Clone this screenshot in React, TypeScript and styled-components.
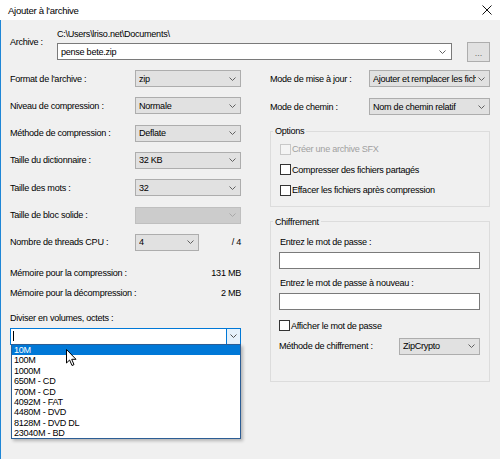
import React from 'react'
import styled, { createGlobalStyle } from 'styled-components'

const GlobalStyle = createGlobalStyle`
  * { box-sizing: border-box; }
  html, body { margin: 0; padding: 0; background: #f0f0f0; }
  body {
    font-family: 'Liberation Sans', Arial, sans-serif;
    font-size: 9.1px;
    letter-spacing: -0.28px;
    color: #000;
  }
`

const Window = styled.div`
  width: 500px;
  height: 459px;
  overflow: hidden;
  background: #f0f0f0;
`

const TitleBar = styled.div`
  height: 20px;
  background: #fff;
  display: flex;
  align-items: center;
  justify-content: space-between;
  padding: 0 8px;
  font-size: 9.6px;
`

const Content = styled.div`
  height: 439px;
  border-left: 1px solid #1e86d6;
  padding: 8px 10px 0 9px;
`

const ArchiveRow = styled.div`
  display: flex;
`

const ArchiveLabel = styled.div`
  width: 47px;
  margin-top: 8px;
  line-height: 12px;
`

const ArchiveMain = styled.div`
  flex: 1;
  display: flex;
  flex-direction: column;
`

const PathText = styled.div`
  line-height: 12px;
  margin-bottom: 3px;
`

const ComboRow = styled.div`
  height: 17px;
  display: flex;
  align-items: center;
`

const TextBox = styled.div<{ $grow?: boolean }>`
  ${(p) => (p.$grow ? 'flex: 1;' : 'width: 100%;')}
  height: 17px;
  background: #fff;
  border: 1px solid #7a7a7a;
  display: flex;
  align-items: center;
  justify-content: space-between;
  padding: 0 5px 0 3px;
`

const BrowseButton = styled.div`
  width: 23px;
  height: 20px;
  flex-shrink: 0;
  margin-left: 15px;
  background: #e1e1e1;
  border: 1px solid #adadad;
  color: #6d6d6d;
  display: flex;
  align-items: flex-end;
  justify-content: center;
  padding-bottom: 4px;
  line-height: 8px;
  letter-spacing: 0;
`

const Columns = styled.div`
  display: flex;
  margin-top: 10px;
`

const LeftCol = styled.div`
  width: 231px;
  display: flex;
  flex-direction: column;
`

const RightCol = styled.div`
  width: 220px;
  margin-left: 29px;
  display: flex;
  flex-direction: column;
`

const RowStack = styled.div<{ $gap: number }>`
  display: flex;
  flex-direction: column;
  gap: ${(p) => p.$gap}px;
`

const Row = styled.div<{ $top?: number }>`
  display: flex;
  align-items: center;
  height: 17px;
  margin-top: ${(p) => p.$top || 0}px;
`

const RowLabel = styled.div<{ $w: number }>`
  width: ${(p) => p.$w}px;
  flex-shrink: 0;
  white-space: nowrap;
`

const SelectBox = styled.div<{ $w: number; $disabled?: boolean }>`
  width: ${(p) => p.$w}px;
  height: 17px;
  flex-shrink: 0;
  border: 1px solid ${(p) => (p.$disabled ? '#bfbfbf' : '#adadad')};
  background: ${(p) => (p.$disabled ? '#cccccc' : '#e1e1e1')};
  display: flex;
  align-items: center;
  padding: 0 4px 0 3px;
`

const SelectText = styled.span`
  flex: 1;
  min-width: 0;
  overflow: hidden;
  white-space: nowrap;
  margin-right: 2px;
`

const Trailing = styled.span`
  margin-left: auto;
`

const InfoLine = styled.div<{ $top: number }>`
  display: flex;
  justify-content: space-between;
  line-height: 12px;
  margin-top: ${(p) => p.$top}px;
`

const VolumeCombo = styled.div`
  position: relative;
  height: 17px;
  margin-top: 4px;
  background: #fff;
  border: 1px solid #0078d7;
  display: flex;
  align-items: center;
`

const Caret = styled.span`
  width: 1px;
  height: 10px;
  margin-left: 2px;
  background: #000;
`

const ComboButton = styled.div`
  margin-left: auto;
  width: 14px;
  height: 100%;
  background: #e5f1fb;
  border-left: 1px solid #0078d7;
  display: flex;
  align-items: center;
  justify-content: center;
`

const DropList = styled.div`
  position: absolute;
  top: 100%;
  left: 0;
  width: 230px;
  background: #fff;
  border: 1px solid #2c5d94;
  box-shadow: 2px 2px 3px rgba(0, 0, 0, 0.25);
  z-index: 2;
`

const ListItem = styled.div<{ $active?: boolean }>`
  height: 10.4px;
  line-height: 10.4px;
  padding-left: 2px;
  background: ${(p) => (p.$active ? '#0078d7' : 'transparent')};
  color: ${(p) => (p.$active ? '#fff' : '#000')};
`

const Pointer = styled.svg`
  position: absolute;
  left: 54px;
  top: 4px;
`

const Group = styled.fieldset<{ $top: number }>`
  margin: ${(p) => p.$top}px 0 0 0;
  padding: 0;
  min-width: 0;
  border: 1px solid #dcdcdc;
`

const Legend = styled.legend`
  margin-left: 2px;
  padding: 0 2px;
  line-height: 12px;
`

const GroupBody = styled.div<{ $pad: string }>`
  padding: ${(p) => p.$pad};
  display: flex;
  flex-direction: column;
`

const CheckRow = styled.div<{ $h: number; $top?: number; $disabled?: boolean }>`
  height: ${(p) => p.$h}px;
  margin-top: ${(p) => p.$top || 0}px;
  display: flex;
  align-items: center;
  gap: 1px;
  color: ${(p) => (p.$disabled ? '#a0a0a0' : '#000')};
`

const CheckBox = styled.span<{ $disabled?: boolean }>`
  width: 11px;
  height: 11px;
  flex-shrink: 0;
  border: 1px solid ${(p) => (p.$disabled ? '#c8c8c8' : '#333')};
  background: ${(p) => (p.$disabled ? '#f4f4f4' : '#fff')};
`

const FieldLabel = styled.div<{ $top?: number }>`
  line-height: 12px;
  margin-top: ${(p) => p.$top || 0}px;
  margin-bottom: 4px;
  padding-left: 1px;
`

const Chevron = ({ color = '#606060' }: { color?: string }) => (
  <svg width="7" height="4" viewBox="0 0 7 4" style={{ flexShrink: 0 }}>
    <polyline points="0.5,0.5 3.5,3.5 6.5,0.5" fill="none" stroke={color} strokeWidth="1" />
  </svg>
)

const Select = ({ w, value, disabled }: { w: number; value?: string; disabled?: boolean }) => (
  <SelectBox $w={w} $disabled={disabled}>
    <SelectText>{value}</SelectText>
    <Chevron color={disabled ? '#a8a8a8' : '#606060'} />
  </SelectBox>
)

const leftRows = [
  { label: "Format de l'archive :", value: 'zip' },
  { label: 'Niveau de compression :', value: 'Normale' },
  { label: 'Méthode de compression :', value: 'Deflate' },
  { label: 'Taille du dictionnaire :', value: '32 KB' },
  { label: 'Taille des mots :', value: '32' },
  { label: 'Taille de bloc solide :', value: '', disabled: true },
]

const volumes = ['10M', '100M', '1000M', '650M - CD', '700M - CD', '4092M - FAT', '4480M - DVD', '8128M - DVD DL', '23040M - BD']

const App = () => {
  return (
    <Window>
      <GlobalStyle />
      <TitleBar>
        <span>Ajouter à l'archive</span>
        <svg width="10" height="10" viewBox="0 0 10 10">
          <path d="M0.5 0.5 L9.5 9.5 M9.5 0.5 L0.5 9.5" stroke="#111" strokeWidth="1" />
        </svg>
      </TitleBar>
      <Content>
        <ArchiveRow>
          <ArchiveLabel>Archive :</ArchiveLabel>
          <ArchiveMain>
            <PathText>C:\Users\lriso.net\Documents\</PathText>
            <ComboRow>
              <TextBox $grow>
                <span>pense bete.zip</span>
                <Chevron />
              </TextBox>
              <BrowseButton>...</BrowseButton>
            </ComboRow>
          </ArchiveMain>
        </ArchiveRow>

        <Columns>
          <LeftCol>
            <RowStack $gap={10.33}>
              {leftRows.map((r) => (
                <Row key={r.label}>
                  <RowLabel $w={125}>{r.label}</RowLabel>
                  <Select w={106} value={r.value} disabled={r.disabled} />
                </Row>
              ))}
              <Row>
                <RowLabel $w={125}>Nombre de threads CPU :</RowLabel>
                <Select w={64} value="4" />
                <Trailing>/ 4</Trailing>
              </Row>
            </RowStack>
            <InfoLine $top={16}>
              <span>Mémoire pour la compression :</span>
              <span>131 MB</span>
            </InfoLine>
            <InfoLine $top={8}>
              <span>Mémoire pour la décompression :</span>
              <span>2 MB</span>
            </InfoLine>
            <InfoLine $top={13}>
              <span>Diviser en volumes, octets :</span>
            </InfoLine>
            <VolumeCombo>
              <Caret />
              <ComboButton>
                <Chevron color="#505050" />
              </ComboButton>
              <DropList>
                {volumes.map((v, i) => (
                  <ListItem key={v} $active={i === 0}>
                    {v}
                  </ListItem>
                ))}
                <Pointer width="12" height="18" viewBox="0 0 12 18">
                  <path
                    d="M0.5 0.5 L0.5 14 L3.6 11 L6 16.5 L8 15.6 L5.7 10.3 L10 10.3 Z"
                    fill="#fff"
                    stroke="#000"
                    strokeWidth="1"
                    strokeLinejoin="miter"
                  />
                </Pointer>
              </DropList>
            </VolumeCombo>
          </LeftCol>

          <RightCol>
            <Row>
              <RowLabel $w={99}>Mode de mise à jour :</RowLabel>
              <Select w={121} value="Ajouter et remplacer les fich" />
            </Row>
            <Row $top={11}>
              <RowLabel $w={99}>Mode de chemin :</RowLabel>
              <Select w={121} value="Nom de chemin relatif" />
            </Row>

            <Group $top={10}>
              <Legend>Options</Legend>
              <GroupBody $pad="2px 0 5px 9px">
                <CheckRow $h={20.5} $disabled>
                  <CheckBox $disabled />
                  <span>Créer une archive SFX</span>
                </CheckRow>
                <CheckRow $h={20.5}>
                  <CheckBox />
                  <span>Compresser des fichiers partagés</span>
                </CheckRow>
                <CheckRow $h={20.5}>
                  <CheckBox />
                  <span>Effacer les fichiers après compression</span>
                </CheckRow>
              </GroupBody>
            </Group>

            <Group $top={9}>
              <Legend>Chiffrement</Legend>
              <GroupBody $pad="8px 9px 26px 8px">
                <FieldLabel>Entrez le mot de passe :</FieldLabel>
                <TextBox />
                <FieldLabel $top={8}>Entrez le mot de passe à nouveau :</FieldLabel>
                <TextBox />
                <CheckRow $h={14} $top={9}>
                  <CheckBox />
                  <span>Afficher le mot de passe</span>
                </CheckRow>
                <Row $top={5}>
                  <RowLabel $w={120}>Méthode de chiffrement :</RowLabel>
                  <Select w={81} value="ZipCrypto" />
                </Row>
              </GroupBody>
            </Group>
          </RightCol>
        </Columns>
      </Content>
    </Window>
  )
}

export default App
